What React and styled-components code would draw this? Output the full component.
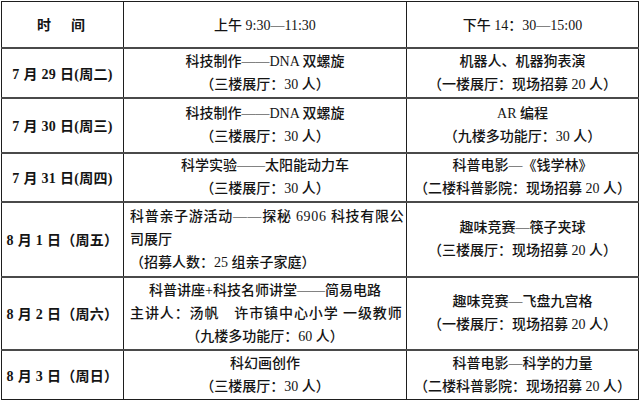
import React from "react";
import styled, { createGlobalStyle } from "styled-components";

const GlobalStyle = createGlobalStyle`
  html, body {
    margin: 0;
    padding: 0;
    background: #ffffff;
  }
  body {
    font-family: "Liberation Serif", "Noto Sans CJK SC", serif;
    color: #141414;
  }
`;

const Page = styled.div`
  padding: 1px 0 0 1px;
`;

const Table = styled.table`
  width: 637px;
  border-collapse: collapse;
  table-layout: fixed;
  font-size: 14px;
`;

const Row = styled.tr`
  height: ${(p) => p.$h}px;
`;

const HeadCell = styled.th`
  border: 1px solid #1e1e1e;
  border-bottom: 2px solid #4a4a4a;
  font-weight: ${(p) => (p.$bold ? 700 : 500)};
  letter-spacing: ${(p) => (p.$bold ? "3px" : "0")};
  text-align: center;
  vertical-align: middle;
  padding: 0;
`;

const DateCell = styled.td`
  border: 1px solid #1e1e1e;
  border-top: 2px solid #4a4a4a;
  font-weight: 700;
  text-align: center;
  vertical-align: middle;
  padding: 0;
  white-space: nowrap;
  letter-spacing: 0.3px;
`;

const Cell = styled.td`
  border: 1px solid #1e1e1e;
  border-top: 2px solid #4a4a4a;
  font-weight: 500;
  text-align: center;
  vertical-align: middle;
  padding: 0 6px;
`;

const Line = styled.div`
  line-height: 23px;
  white-space: nowrap;
  text-align: ${(p) => p.$align || "center"};
  letter-spacing: ${(p) => p.$spread || 0}px;
`;

const rows = [
  {
    h: 50,
    date: "7 月 29 日(周二)",
    am: [{ t: "科技制作——DNA 双螺旋" }, { t: "（三楼展厅：30 人）" }],
    pm: [{ t: "机器人、机器狗表演" }, { t: "（一楼展厅：现场招募 20 人）" }],
  },
  {
    h: 55,
    date: "7 月 30 日(周三)",
    am: [{ t: "科技制作——DNA 双螺旋" }, { t: "（三楼展厅：30 人）" }],
    pm: [{ t: "AR 编程" }, { t: "（九楼多功能厅：30 人）" }],
  },
  {
    h: 49,
    date: "7 月 31 日(周四)",
    am: [{ t: "科学实验——太阳能动力车" }, { t: "（三楼展厅：30 人）" }],
    pm: [{ t: "科普电影—《钱学林》" }, { t: "（二楼科普影院：现场招募 20 人）" }],
  },
  {
    h: 75,
    date: "8 月 1 日（周五）",
    am: [
      { t: "科普亲子游活动——探秘 6906 科技有限公", align: "left", spread: 0.7 },
      { t: "司展厅", align: "left" },
      { t: "（招募人数：25 组亲子家庭）", align: "left" },
    ],
    pm: [{ t: "趣味竞赛—筷子夹球" }, { t: "（三楼展厅：现场招募 20 人）" }],
  },
  {
    h: 73,
    date: "8 月 2 日（周六）",
    am: [
      { t: "科普讲座+科技名师讲堂——简易电路" },
      { t: "主讲人：汤帆　许市镇中心小学 一级教师", align: "left", spread: 0.9 },
      { t: "（九楼多功能厅：60 人）" },
    ],
    pm: [{ t: "趣味竞赛—飞盘九宫格" }, { t: "（一楼展厅：现场招募 20 人）" }],
  },
  {
    h: 50,
    date: "8 月 3 日（周日）",
    am: [{ t: "科幻画创作" }, { t: "（三楼展厅：30 人）" }],
    pm: [{ t: "科普电影—科学的力量" }, { t: "（二楼科普影院：现场招募 20 人）" }],
  },
];

const Lines = ({ items }) =>
  items.map((l, i) => (
    <Line key={i} $align={l.align} $spread={l.spread}>
      {l.t}
    </Line>
  ));

export default function App() {
  return (
    <Page>
      <GlobalStyle />
      <Table>
        <colgroup>
          <col style={{ width: 122 }} />
          <col style={{ width: 283 }} />
          <col style={{ width: 232 }} />
        </colgroup>
        <thead>
          <Row $h={46}>
            <HeadCell $bold>时　间</HeadCell>
            <HeadCell>上午 9:30—11:30</HeadCell>
            <HeadCell>下午 14：30—15:00</HeadCell>
          </Row>
        </thead>
        <tbody>
          {rows.map((r) => (
            <Row key={r.date} $h={r.h}>
              <DateCell>{r.date}</DateCell>
              <Cell>
                <Lines items={r.am} />
              </Cell>
              <Cell>
                <Lines items={r.pm} />
              </Cell>
            </Row>
          ))}
        </tbody>
      </Table>
    </Page>
  );
}
